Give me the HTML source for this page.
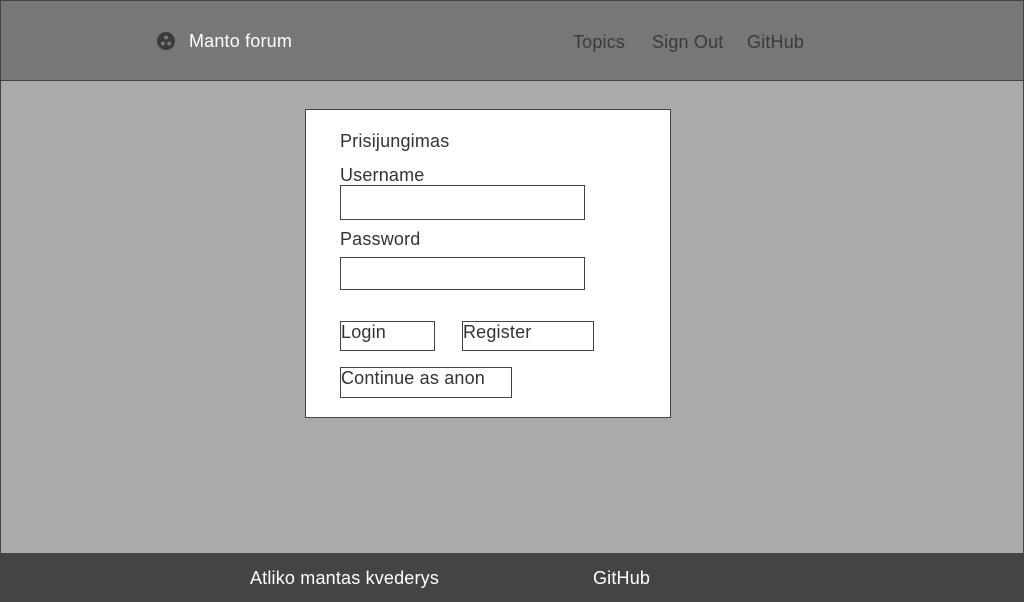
<!DOCTYPE html>
<html><head><style>
*{margin:0;padding:0;box-sizing:border-box}
body{width:1024px;height:602px;overflow:hidden;background:#aaa;font-family:"Liberation Sans",sans-serif;position:relative}
.a{position:absolute}
.frame{left:0;top:0;width:1024px;height:602px;border:1px solid #444}
.hdr{left:0;top:0;width:1024px;height:81px;background:#777;border:1px solid #444}
.ftr{left:0;top:553px;width:1024px;height:49px;background:#444}
.t{font-size:18px;white-space:nowrap;line-height:20px;letter-spacing:.18px}
.card{left:305px;top:109px;width:366px;height:309px;background:#fff;border:1px solid #444}
.box{border:1px solid #444;background:#fff}
.btn{font-size:18px;color:#333;line-height:20px;padding-top:0;white-space:nowrap;letter-spacing:.18px}
</style></head><body>
<div class="a hdr"></div>
<svg class="a" style="left:157px;top:32px" width="18" height="18" viewBox="0 0 18 18"><circle cx="9" cy="9" r="9" fill="#3a3a3a"/><circle cx="9" cy="5.5" r="2" fill="#777"/><circle cx="5.8" cy="11.5" r="2" fill="#777"/><circle cx="12.2" cy="11.5" r="2" fill="#777"/></svg>
<div class="a t" style="left:189px;top:31px;color:#fff">Manto forum</div>
<div class="a t" style="left:573px;top:32px;color:#3a3a3a">Topics</div>
<div class="a t" style="left:652px;top:32px;color:#3a3a3a">Sign Out</div>
<div class="a t" style="left:747px;top:32px;color:#3a3a3a">GitHub</div>
<div class="a card"></div>
<div class="a t" style="left:340px;top:131px;color:#333">Prisijungimas</div>
<div class="a t" style="left:340px;top:165px;color:#333">Username</div>
<div class="a box" style="left:340px;top:185px;width:245px;height:35px"></div>
<div class="a t" style="left:340px;top:229px;color:#333">Password</div>
<div class="a box" style="left:340px;top:257px;width:245px;height:33px"></div>
<div class="a box btn" style="left:340px;top:321px;width:95px;height:30px">Login</div>
<div class="a box btn" style="left:462px;top:321px;width:132px;height:30px">Register</div>
<div class="a box btn" style="left:340px;top:367px;width:172px;height:31px">Continue as anon</div>
<div class="a ftr"></div>
<div class="a t" style="left:250px;top:568px;color:#fff">Atliko mantas kvederys</div>
<div class="a t" style="left:593px;top:568px;color:#fff">GitHub</div>
<div class="a frame"></div>
</body></html>
